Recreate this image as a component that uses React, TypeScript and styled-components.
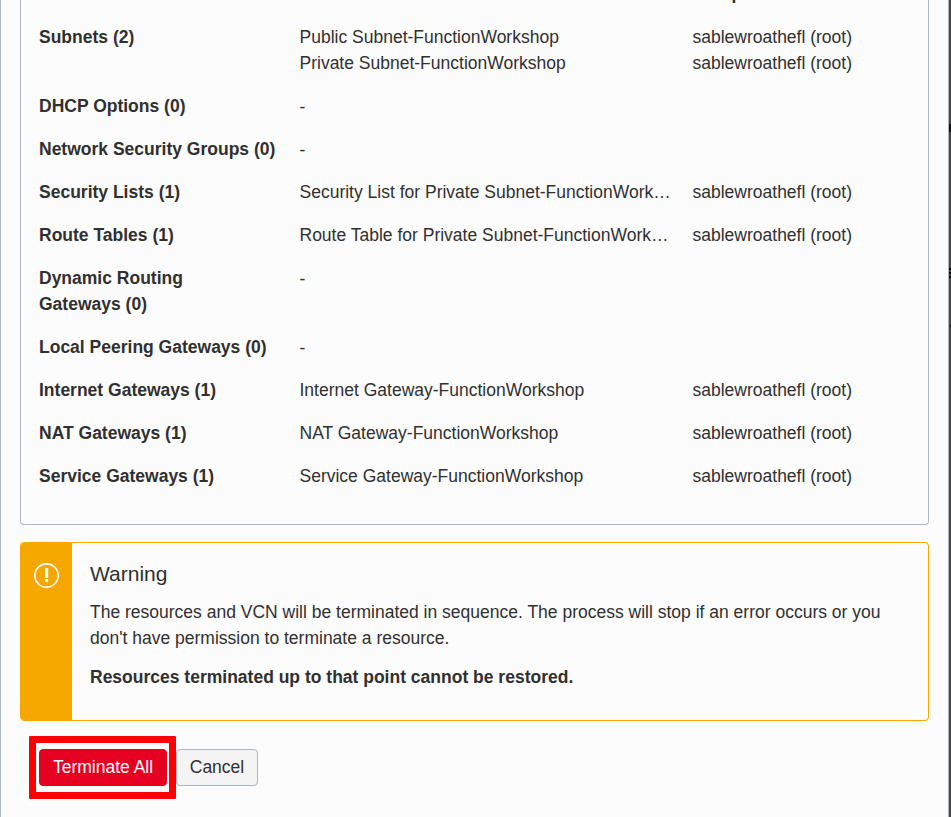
import React from "react";
import styled, { createGlobalStyle } from "styled-components";

const GlobalStyle = createGlobalStyle`
  *, *::before, *::after { box-sizing: border-box; }
  body {
    margin: 0;
    background: #444749;
    color: #303030;
    font: 17.5px/26px "Liberation Sans", Arial, sans-serif;
    overflow: hidden;
  }
`;

const Screen = styled.div`
  display: flex;
  height: 817px;
`;

const Dialog = styled.main`
  flex: none;
  width: 949px;
  height: 817px;
  padding: 0 19px;
  overflow: hidden;
  background: #fcfcfc;
  border: solid #aeb6bf;
  border-width: 0 1px;
`;

const Backdrop = styled.div`
  flex: 1;
  background:
    linear-gradient(#0c0c10, #0c0c10) 0 124px / 2px 8px no-repeat,
    linear-gradient(#08080c, #08080c) 0 268px / 2px 2px no-repeat,
    linear-gradient(#08080c, #08080c) 0 272px / 2px 2px no-repeat,
    linear-gradient(#08080c, #08080c) 0 276px / 2px 2px no-repeat,
    linear-gradient(#08080c, #08080c) 1px 325px / 1px 2px no-repeat,
    #444749;
`;

const ResourcePanel = styled.section`
  height: 525px;
  padding: 0 18px;
  display: flex;
  flex-direction: column;
  justify-content: flex-end;
  padding-bottom: 35px;
  gap: 17px;
  border: 1px solid #aeb6bf;
  border-top: 0;
  border-radius: 0 0 4px 4px;
`;

const ResourceRow = styled.div`
  display: grid;
  grid-template-columns: 260.5px 393px 1fr;
  flex: none;
`;

const HeaderRow = styled(ResourceRow)`
  margin-bottom: 1px;
`;

const Label = styled.div`
  width: 240px;
  font-weight: 700;
`;

const Names = styled.div<{ $empty: boolean }>`
  height: ${({ $empty }) => ($empty ? "26px" : "auto")};
  padding-top: ${({ $empty }) => ($empty ? 1 : 0)}px;
`;

const Line = styled.div`
  white-space: nowrap;
`;

const Heading = styled.div`
  font-weight: 700;
`;

const Alert = styled.section`
  display: flex;
  height: 179px;
  margin-top: 17px;
  border: 1px solid #f6a700;
  border-radius: 4px;
  overflow: hidden;
`;

const AlertStripe = styled.div`
  width: 51px;
  padding: 20px 0 0 13px;
  background: #f6a700;

  svg { display: block; }
`;

const AlertBody = styled.div`
  padding: 18px;
`;

const AlertTitle = styled.h2`
  margin: 0 0 12px;
  font-size: 21px;
  font-weight: 400;
  line-height: 26px;
`;

const Paragraph = styled.p<{ $strong?: boolean }>`
  margin: 0 0 13px;
  font-weight: ${({ $strong }) => ($strong ? 700 : 400)};
`;

const Actions = styled.footer`
  display: flex;
  align-items: center;
  margin: 15px 0 0 9px;
`;

const Highlight = styled.div`
  width: 147px;
  height: 63px;
  padding: 6px 3px;
  border: 7px solid #ff0000;
  border-radius: 1px;
`;

const Button = styled.button<{ $danger?: boolean }>`
  display: block;
  width: ${({ $danger }) => ($danger ? 128 : 82)}px;
  height: 37px;
  padding: 0;
  font: inherit;
  line-height: 35px;
  white-space: nowrap;
  color: ${({ $danger }) => ($danger ? "#fff" : "#303030")};
  background: ${({ $danger }) => ($danger ? "#e6001f" : "#f4f4f4")};
  border: 1px solid ${({ $danger }) => ($danger ? "#e6001f" : "#aeb6bf")};
  border-radius: 4px;
`;

type Resource = { label: string[]; names: string[]; compartments: number };

const resources: Resource[] = [
  {
    label: ["Subnets (2)"],
    names: ["Public Subnet-FunctionWorkshop", "Private Subnet-FunctionWorkshop"],
    compartments: 2,
  },
  { label: ["DHCP Options (0)"], names: ["-"], compartments: 0 },
  { label: ["Network Security Groups (0)"], names: ["-"], compartments: 0 },
  { label: ["Security Lists (1)"], names: ["Security List for Private Subnet-FunctionWork…"], compartments: 1 },
  { label: ["Route Tables (1)"], names: ["Route Table for Private Subnet-FunctionWork…"], compartments: 1 },
  { label: ["Dynamic Routing", "Gateways (0)"], names: ["-"], compartments: 0 },
  { label: ["Local Peering Gateways (0)"], names: ["-"], compartments: 0 },
  { label: ["Internet Gateways (1)"], names: ["Internet Gateway-FunctionWorkshop"], compartments: 1 },
  { label: ["NAT Gateways (1)"], names: ["NAT Gateway-FunctionWorkshop"], compartments: 1 },
  { label: ["Service Gateways (1)"], names: ["Service Gateway-FunctionWorkshop"], compartments: 1 },
];

const Lines = ({ items }: { items: string[] }) => (
  <>
    {items.map((text, i) => (
      <Line key={i}>{text}</Line>
    ))}
  </>
);

const WarningIcon = () => (
  <svg width="26" height="26" viewBox="0 0 26 26" fill="none">
    <circle cx="12.5" cy="12.5" r="11.7" stroke="#fff" strokeWidth="1.7" />
    <path d="M11 5h3.2v10H11zM11 16h3.2v3H11z" fill="#fff" />
  </svg>
);

export default function App() {
  return (
    <>
      <GlobalStyle />
      <Screen>
        <Dialog>
          <ResourcePanel>
            <HeaderRow>
              <Heading />
              <Heading />
              <Heading>Compartment</Heading>
            </HeaderRow>
            {resources.map((r) => (
              <ResourceRow key={r.label[0]}>
                <Label><Lines items={r.label} /></Label>
                <Names $empty={r.compartments === 0}><Lines items={r.names} /></Names>
                <div><Lines items={Array(r.compartments).fill("sablewroathefl (root)")} /></div>
              </ResourceRow>
            ))}
          </ResourcePanel>
          <Alert>
            <AlertStripe><WarningIcon /></AlertStripe>
            <AlertBody>
              <AlertTitle>Warning</AlertTitle>
              <Paragraph>
                The resources and VCN will be terminated in sequence. The process will stop if an error occurs or you
                <br />
                don't have permission to terminate a resource.
              </Paragraph>
              <Paragraph $strong>
                Resources terminated up to that point cannot be restored.
              </Paragraph>
            </AlertBody>
          </Alert>
          <Actions>
            <Highlight><Button $danger>Terminate All</Button></Highlight>
            <Button>Cancel</Button>
          </Actions>
        </Dialog>
        <Backdrop />
      </Screen>
    </>
  );
}
